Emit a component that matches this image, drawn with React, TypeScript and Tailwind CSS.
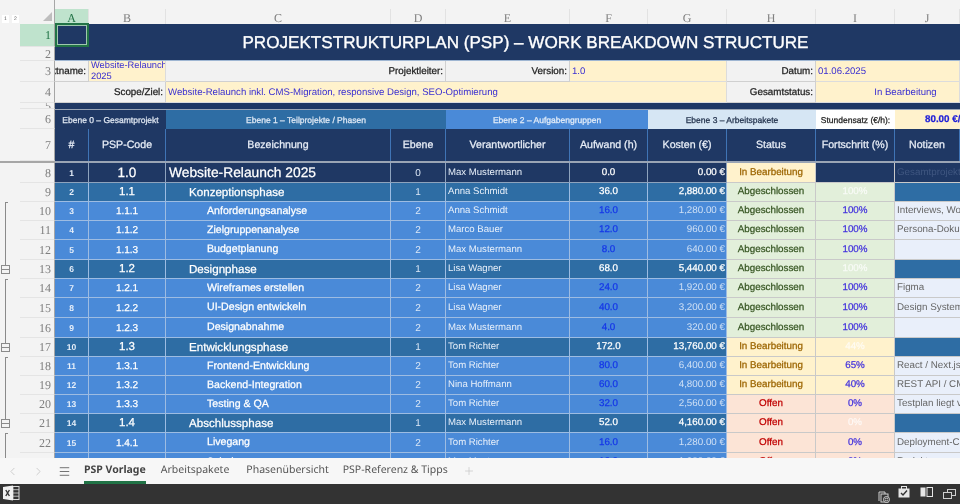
import React from "react";
import { ChevronLeft, ChevronRight, Menu, Plus } from "lucide-react";

const colW = "grid grid-cols-[34px_77px_225px_55px_124px_78px_79px_89px_79px_65px]";
const heavy = "[-webkit-text-stroke:0.25px]";

type Kind = 0 | 1 | 2;
type R = {
  row: number; h: string; n: number; code: string; name: string; lvl: number; who: string;
  eff: string; cost: string; status: string; prog: string; note: string; kind: Kind;
};

const data: R[] = [
  { row: 8, h: "h-[20px]", n: 1, code: "1.0", name: "Website-Relaunch 2025", lvl: 0, who: "Max Mustermann", eff: "0.0", cost: "0.00 €", status: "In Bearbeitung", prog: "", note: "Gesamtprojekt", kind: 0 },
  { row: 9, h: "h-[19px]", n: 2, code: "1.1", name: "Konzeptionsphase", lvl: 1, who: "Anna Schmidt", eff: "36.0", cost: "2,880.00 €", status: "Abgeschlossen", prog: "100%", note: "", kind: 1 },
  { row: 10, h: "h-[19px]", n: 3, code: "1.1.1", name: "Anforderungsanalyse", lvl: 2, who: "Anna Schmidt", eff: "16.0", cost: "1,280.00 €", status: "Abgeschlossen", prog: "100%", note: "Interviews, Workshops", kind: 2 },
  { row: 11, h: "h-[19px]", n: 4, code: "1.1.2", name: "Zielgruppenanalyse", lvl: 2, who: "Marco Bauer", eff: "12.0", cost: "960.00 €", status: "Abgeschlossen", prog: "100%", note: "Persona-Dokument", kind: 2 },
  { row: 12, h: "h-[20px]", n: 5, code: "1.1.3", name: "Budgetplanung", lvl: 2, who: "Max Mustermann", eff: "8.0", cost: "640.00 €", status: "Abgeschlossen", prog: "100%", note: "", kind: 2 },
  { row: 13, h: "h-[19px]", n: 6, code: "1.2", name: "Designphase", lvl: 1, who: "Lisa Wagner", eff: "68.0", cost: "5,440.00 €", status: "Abgeschlossen", prog: "100%", note: "", kind: 1 },
  { row: 14, h: "h-[19px]", n: 7, code: "1.2.1", name: "Wireframes erstellen", lvl: 2, who: "Lisa Wagner", eff: "24.0", cost: "1,920.00 €", status: "Abgeschlossen", prog: "100%", note: "Figma", kind: 2 },
  { row: 15, h: "h-[20px]", n: 8, code: "1.2.2", name: "UI-Design entwickeln", lvl: 2, who: "Lisa Wagner", eff: "40.0", cost: "3,200.00 €", status: "Abgeschlossen", prog: "100%", note: "Design System", kind: 2 },
  { row: 16, h: "h-[20px]", n: 9, code: "1.2.3", name: "Designabnahme", lvl: 2, who: "Max Mustermann", eff: "4.0", cost: "320.00 €", status: "Abgeschlossen", prog: "100%", note: "", kind: 2 },
  { row: 17, h: "h-[19px]", n: 10, code: "1.3", name: "Entwicklungsphase", lvl: 1, who: "Tom Richter", eff: "172.0", cost: "13,760.00 €", status: "In Bearbeitung", prog: "44%", note: "", kind: 1 },
  { row: 18, h: "h-[19px]", n: 11, code: "1.3.1", name: "Frontend-Entwicklung", lvl: 2, who: "Tom Richter", eff: "80.0", cost: "6,400.00 €", status: "In Bearbeitung", prog: "65%", note: "React / Next.js", kind: 2 },
  { row: 19, h: "h-[19px]", n: 12, code: "1.3.2", name: "Backend-Integration", lvl: 2, who: "Nina Hoffmann", eff: "60.0", cost: "4,800.00 €", status: "In Bearbeitung", prog: "40%", note: "REST API / CMS", kind: 2 },
  { row: 20, h: "h-[19px]", n: 13, code: "1.3.3", name: "Testing & QA", lvl: 2, who: "Tom Richter", eff: "32.0", cost: "2,560.00 €", status: "Offen", prog: "0%", note: "Testplan liegt vor", kind: 2 },
  { row: 21, h: "h-[19px]", n: 14, code: "1.4", name: "Abschlussphase", lvl: 1, who: "Max Mustermann", eff: "52.0", cost: "4,160.00 €", status: "Offen", prog: "0%", note: "", kind: 1 },
  { row: 22, h: "h-[20px]", n: 15, code: "1.4.1", name: "Livegang", lvl: 2, who: "Tom Richter", eff: "16.0", cost: "1,280.00 €", status: "Offen", prog: "0%", note: "Deployment-Checkliste", kind: 2 },
  { row: 23, h: "h-[19px]", n: 16, code: "1.4.2", name: "Schulung", lvl: 2, who: "Max Mustermann", eff: "16.0", cost: "1,280.00 €", status: "Offen", prog: "0%", note: "Redakteure", kind: 2 },
];

const statusCls = (s: string) =>
  s === "Abgeschlossen" ? "bg-[#e2efda] text-[#375623]" : s === "Offen" ? "bg-[#fce4d6] text-[#c00000]" : "bg-[#fff2cc] text-[#9c6500]";
const progCls = (s: string) =>
  s === "Abgeschlossen" ? "bg-[#e2efda]" : s === "Offen" ? "bg-[#fce4d6]" : "bg-[#fff2cc]";

function Gutter({ label, h, selected, children }: { label: number; h: string; selected?: boolean; children?: React.ReactNode }) {
  return (
    <div className={`${h} w-[55px] shrink-0 flex relative`}>
      <div className="w-[20px] shrink-0 relative">{children}</div>
      <div className={`flex-1 flex items-center justify-end pr-[3px] overflow-hidden text-[12px] border-b border-[#e4e4e4] border-r border-r-[#a6a6a6] font-['Liberation_Serif',serif] ${selected ? "bg-[#bfe3cd] text-[#217346]" : "text-[#7f7f7f]"}`}>
        {label}
      </div>
    </div>
  );
}

const Bracket = () => <div className="absolute left-[5px] top-0 bottom-0 w-[3px] border-l border-t border-[#8a8a8a]" />;
const Line = () => <div className="absolute left-[5px] top-0 bottom-0 border-l border-[#8a8a8a]" />;
const MinusBox = () => (
  <>
    <div className="absolute left-[5px] top-0 h-[6px] border-l border-[#8a8a8a]" />
    <div className="absolute left-[1px] top-[5px] w-[9px] h-[9px] border border-[#8a8a8a] bg-[#f3f3f3] flex items-center">
      <div className="w-full h-px bg-[#8a8a8a]" />
    </div>
  </>
);

function outline(row: number) {
  if (row === 10 || row === 14 || row === 18 || row === 22) return <Bracket />;
  if (row === 13 || row === 17 || row === 21) return <MinusBox />;
  if (row > 10 && row <= 23) return <Line />;
  return null;
}

function DataRow({ r }: { r: R }) {
  const bg = r.kind === 0 ? "bg-[#1f3864]" : r.kind === 1 ? "bg-[#2e6da4]" : "bg-[#4a8ad8]";
  const line = r.kind === 0 ? "border-[#8ea3bd]" : "border-[#9dbce2]";
  const cell = `${bg} border-r border-b ${line} flex items-center pt-[1px] overflow-hidden whitespace-nowrap`;
  const side = "border-r border-b border-[#c9c9c9] flex items-center justify-center pt-[1px] overflow-hidden whitespace-nowrap";
  const noteBg = r.kind === 2 ? "bg-[#e9effa] text-[#666666]" : r.kind === 1 ? "bg-[#2e6da4] text-transparent" : "bg-[#1f3864] text-[#3f5680]";
  return (
    <div className="flex">
      <Gutter label={r.row} h={r.h}>{outline(r.row)}</Gutter>
      <div className={`${colW} flex-1 ${r.h}`}>
        <div className={`${cell} justify-center text-[#e8f0fa] font-bold text-[8.5px]`}>{r.n}</div>
        <div className={`${cell} justify-center text-white ${heavy} ${r.kind === 0 ? "text-[13.5px]" : r.kind === 1 ? "text-[11.5px]" : "text-[10px]"}`}>{r.code}</div>
        <div className={`${cell} text-white ${heavy} ${r.kind === 0 ? "text-[13.8px] pl-[3px]" : r.kind === 1 ? "text-[11.6px] pl-[23px]" : "text-[10.6px] pl-[41px]"}`}>{r.name}</div>
        <div className={`${cell} justify-center text-[#dbe7f6] text-[10px]`}>{r.lvl}</div>
        <div className={`${cell} pl-[2px] text-[9.6px] text-[#e8f0fa]`}>{r.who}</div>
        <div className={`${cell} justify-center text-[9.8px] ${heavy} ${r.kind === 2 ? "text-[#1436e8]" : "text-white"}`}>{r.eff}</div>
        <div className={`${cell} justify-end pr-[1px] text-[9.8px] ${r.kind === 2 ? "text-[#cfe0f5]" : `text-white ${heavy}`}`}>{r.cost}</div>
        <div className={`${side} ${statusCls(r.status)} text-[9.8px] ${heavy}`}>{r.status}</div>
        <div className={`${side} ${r.kind === 0 ? "bg-[#1f3864]" : progCls(r.status)} text-[9.8px] ${heavy} ${r.kind === 1 ? "text-white/70" : "text-[#4433dd]"}`}>{r.prog}</div>
        <div className={`${noteBg} border-b border-[#c9c9c9] flex items-center pl-[2px] pt-[1px] overflow-hidden whitespace-nowrap text-[9.8px]`}>{r.note}</div>
      </div>
    </div>
  );
}

const labelCell = `bg-[#f2f2f2] flex items-center justify-end pr-[2px] pt-[2px] text-[9.8px] text-[#222] ${heavy} border-r border-b border-[#d0d0d0] overflow-hidden whitespace-nowrap`;
const inputCell = "bg-[#fff2cc] flex items-center pl-[2px] pt-[2px] text-[#3a2fd0] text-[9.6px] whitespace-nowrap border-r border-b border-[#dcdcdc] overflow-hidden";
const headCell = `bg-[#1f3864] flex items-center justify-center pt-[2px] text-[10.6px] text-[#e8eef7] ${heavy} border-r border-[#3f74b5] overflow-hidden whitespace-nowrap`;
const legendCell = "flex items-center justify-center pt-[1px] whitespace-nowrap";

export default function App() {
  return (
    <div className="w-[960px] h-[504px] flex flex-col overflow-hidden bg-[#f3f3f3] font-['Liberation_Sans',Arial,sans-serif] blur-[0.4px] [text-rendering:geometricPrecision]">
      <div className="h-[458px] flex flex-col overflow-hidden">
        {/* column headers */}
        <div className="flex h-[24px] shrink-0 pt-[9px]">
          <div className="w-[55px] shrink-0 flex items-start relative border-r border-[#a6a6a6] -mt-[9px] h-[24px]">
            <div className="absolute left-[2px] top-[15px] flex gap-[3px]">
              <span className="w-[7px] h-[8px] bg-white text-[5px] leading-[8px] text-center text-[#555]">1</span>
              <span className="w-[7px] h-[8px] bg-white text-[5px] leading-[8px] text-center text-[#555]">2</span>
            </div>
            <svg className="absolute left-[43px] top-[12px]" width="9" height="9" viewBox="0 0 9 9"><polygon points="9,0 9,9 0,9" fill="#bdbdbd" /></svg>
          </div>
          <div className={`${colW} flex-1 text-[12px] font-['Liberation_Serif',serif] text-[#808080]`}>
            {["A", "B", "C", "D", "E", "F", "G", "H", "I", "J"].map((c, i) => (
              <div key={c} className={`flex items-center justify-center border-r border-[#e2e2e2] ${i === 0 ? "bg-[#bfe3cd] text-[#217346]" : ""}`}>{c}</div>
            ))}
          </div>
        </div>

        {/* title */}
        <div className="flex">
          <div>
            <Gutter label={1} h="h-[23px]" selected />
            <Gutter label={2} h="h-[14px]" />
          </div>
          <div className="flex-1 h-[37px] bg-[#1f3864] relative flex items-center justify-center pl-[36px] pt-[1px] border-b border-[#9fb6d2]">
            <div className="absolute left-0 -top-[1px] w-[34px] h-[24px] border-2 border-[#217346] shadow-[inset_0_0_0_1px_#9fc7ae]" />
            <span className="text-white text-[17.1px] [-webkit-text-stroke:0.35px] whitespace-nowrap">PROJEKTSTRUKTURPLAN (PSP) – WORK BREAKDOWN STRUCTURE</span>
          </div>
        </div>

        {/* meta rows */}
        <div className="flex">
          <Gutter label={3} h="h-[21px]" />
          <div className={`${colW} flex-1 h-[21px]`}>
            <div className={labelCell}>Projektname:</div>
            <div className="bg-[#fff2cc] flex items-center pl-[2px] text-[#3a2fd0] text-[9.3px] leading-[11.5px] border-r border-b border-[#dcdcdc] overflow-hidden whitespace-nowrap">
              <span>Website-Relaunch<br />2025</span>
            </div>
            <div className={`${labelCell} col-span-2`}>Projektleiter:</div>
            <div className={labelCell}>Version:</div>
            <div className={`${inputCell} col-span-2`}>1.0</div>
            <div className={labelCell}>Datum:</div>
            <div className={`${inputCell} col-span-2`}>01.06.2025</div>
          </div>
        </div>
        <div className="flex">
          <Gutter label={4} h="h-[21px]" />
          <div className={`${colW} flex-1 h-[21px]`}>
            <div className={`${labelCell} col-span-2`}>Scope/Ziel:</div>
            <div className={`${inputCell} col-span-5`}>Website-Relaunch inkl. CMS-Migration, responsive Design, SEO-Optimierung</div>
            <div className={labelCell}>Gesamtstatus:</div>
            <div className={`${inputCell} col-span-2 justify-center pl-[36px]`}>In Bearbeitung</div>
          </div>
        </div>
        <div className="flex">
          <Gutter label={5} h="h-[6px]" />
          <div className="flex-1 h-[6px] bg-[#1f3864]" />
        </div>

        {/* legend */}
        <div className="flex">
          <Gutter label={6} h="h-[20px]" />
          <div className={`${colW} flex-1 h-[20px] text-[8.5px] ${heavy} border-t border-[#9aa5b5]`}>
            <div className={`col-span-2 bg-[#1f3864] text-[#dfe7f2] ${legendCell}`}>Ebene 0 – Gesamtprojekt</div>
            <div className={`col-span-2 bg-[#2e6da4] text-[#dfe9f5] ${legendCell}`}>Ebene 1 – Teilprojekte / Phasen</div>
            <div className={`col-span-2 bg-[#4a8ad8] text-[#e3edf9] ${legendCell}`}>Ebene 2 – Aufgabengruppen</div>
            <div className={`col-span-2 bg-[#d6e6f4] text-[#1f2f4a] ${legendCell}`}>Ebene 3 – Arbeitspakete</div>
            <div className={`bg-white text-[#222] ${legendCell}`}>Stundensatz (€/h):</div>
            <div className="bg-[#fff2cc] text-[#1f1fd8] flex items-center justify-start pl-[30px] pt-[1px] text-[9.8px] font-bold whitespace-nowrap overflow-hidden">80.00 €/h</div>
          </div>
        </div>

        {/* header */}
        <div className="flex">
          <div className="border-b-2 border-[#a6a6a6]">
            <Gutter label={7} h="h-[32px]" />
          </div>
          <div className={`${colW} flex-1 h-[34px] border-b-2 border-[#9aa5b5]`}>
            {["#", "PSP-Code", "Bezeichnung", "Ebene", "Verantwortlicher", "Aufwand (h)", "Kosten (€)", "Status", "Fortschritt (%)", "Notizen"].map((t) => (
              <div key={t} className={headCell}>{t}</div>
            ))}
          </div>
        </div>

        {data.map((r) => <DataRow key={r.row} r={r} />)}
      </div>

      {/* tabs */}
      <div className="h-[26px] shrink-0 bg-[#f7f7f7] flex items-center text-[10.5px] font-['Noto_Sans','Open_Sans',sans-serif] text-[#555]">
        <ChevronLeft className="ml-[6px] text-[#c4c4c4]" size={13} strokeWidth={1.5} />
        <ChevronRight className="ml-[13px] text-[#c4c4c4]" size={13} strokeWidth={1.5} />
        <Menu className="ml-[13px] text-[#555]" size={13} strokeWidth={1.5} />
        <div className="ml-[13px] h-full flex items-center font-bold text-[#444] border-b-[3px] border-[#217346] pt-[2px]">PSP Vorlage</div>
        <div className="ml-[15px]">Arbeitspakete</div>
        <div className="ml-[17px]">Phasenübersicht</div>
        <div className="ml-[14px]">PSP-Referenz &amp; Tipps</div>
        <Plus className="ml-[15px] text-[#c8c8c8]" size={12} strokeWidth={1.5} />
      </div>

      {/* status bar */}
      <div className="h-[20px] shrink-0 bg-[#333333] flex items-center justify-between">
        <svg className="ml-[3px] -mt-[3px]" width="17" height="16" viewBox="0 0 17 16">
          <rect x="7" y="1.5" width="9" height="13" fill="none" stroke="#d8d8d8" strokeWidth="1" />
          <path d="M10 1.5v13M7 4.7h9M7 8h9M7 11.2h9" stroke="#d8d8d8" strokeWidth="0.8" />
          <polygon points="0,2 10,0.5 10,15.5 0,14" fill="#efefef" />
          <path d="M2.8 5l3.6 6M6.4 5l-3.6 6" stroke="#333" strokeWidth="1.4" />
        </svg>
        <div className="flex items-center pr-[4px]">
          <svg className="mt-[5px]" width="13" height="14" viewBox="0 0 13 14" fill="none" stroke="#cfcfcf" strokeWidth="1">
            <path d="M1 11V2h6v2" />
            <rect x="3" y="4" width="7" height="8" />
            <circle cx="8.5" cy="9.5" r="3" fill="#333" />
            <path d="M7 9.5a1.6 1.6 0 0 1 3 -.5M10 9.5a1.6 1.6 0 0 1 -3 .5" />
          </svg>
          <svg className="ml-[7px] -mt-[4px]" width="12" height="12" viewBox="0 0 12 12">
            <rect x="0.5" y="2.5" width="11" height="9" fill="#e6e6e6" />
            <rect x="3.5" y="0.5" width="5" height="3" fill="none" stroke="#e6e6e6" />
            <path d="M3 7l2 2 4-4.5" fill="none" stroke="#333" strokeWidth="1.4" />
          </svg>
          <svg className="ml-[10px] -mt-[5px]" width="13" height="10" viewBox="0 0 13 10">
            <rect x="0.5" y="0.5" width="5" height="9" fill="#e6e6e6" />
            <rect x="7" y="0.5" width="5.5" height="9" fill="none" stroke="#e6e6e6" />
          </svg>
          <svg className="ml-[10px]" width="13" height="10" viewBox="0 0 13 10" fill="none" stroke="#cfcfcf">
            <rect x="4.5" y="0.5" width="8" height="6" />
            <rect x="0.5" y="3.5" width="8" height="6" fill="#333" />
          </svg>
        </div>
      </div>
    </div>
  );
}
